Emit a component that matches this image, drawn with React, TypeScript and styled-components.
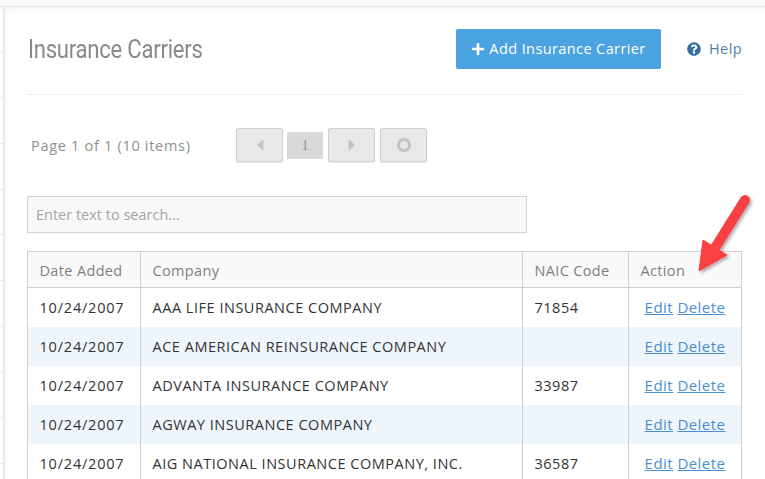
import React from 'react';
import styled, { createGlobalStyle } from 'styled-components';
import { FaPlus, FaQuestionCircle, FaCaretLeft, FaCaretRight } from 'react-icons/fa';

const Global = createGlobalStyle`
  html, body { margin: 0; padding: 0; background: #fff; overflow: hidden; }
  body { font-family: "Open Sans", "Noto Sans", sans-serif; }
`;
const Page = styled.div`
  position: relative; width: 765px; height: 479px; overflow: hidden; display: flex; flex-direction: column; background: #fff;
`;
const TopBar = styled.div`
  height: 6px; flex: none; background: #fafafa; border-bottom: 1px solid #e6e6e6; box-shadow: 0 2px 6px rgba(0,0,0,.05);
`;
const Body = styled.div`display: flex; flex: 1; min-height: 0;`;
const Rail = styled.div`
  width: 3px; flex: none; border-right: 2px solid #e8e8e8; display: flex; flex-direction: column; box-shadow: 3px 0 5px rgba(0,0,0,.025);
`;
const RailCell = styled.div`height: 45.67px; flex: none; border-bottom: 1px solid #e6e6e6; box-sizing: border-box;`;
const Main = styled.div`flex: 1; min-width: 0; padding: 0 23px 0 22px;`;
const Header = styled.div`
  height: 88px; box-sizing: border-box; display: flex; align-items: flex-start; border-bottom: 1px solid #eee; padding-top: 22px;
`;
const Title = styled.h1`
  margin: 4px 0 0 1px; font: 400 26px/32px "Roboto", sans-serif; letter-spacing: -0.3px; color: #8a8a8a; flex: 1; white-space: nowrap; transform-origin: left center; transform: scaleX(.85);
`;
const AddButton = styled.button`
  width: 205px; height: 40px; border: 0; border-radius: 2px; background: #4ba3e1; color: #fff; font: 400 14.5px/40px "Open Sans", sans-serif; letter-spacing: .4px; display: flex; align-items: center; justify-content: center; gap: 4px; padding: 0;
`;
const Help = styled.div`
  margin: 10px 0 0 26px; display: flex; align-items: center; gap: 8px; color: #4f7fa8; font-size: 14.5px; letter-spacing: .4px; line-height: 20px;
  svg { color: #37709f; }
`;
const Pager = styled.div`display: flex; align-items: center; height: 34px; margin-top: 33px;`;
const PageInfo = styled.div`width: 209px; padding-left: 4px; box-sizing: border-box; color: #8f8f8f; font-size: 14.5px; letter-spacing: .7px; white-space: nowrap;`;
const PagerButton = styled.div`
  width: 47px; height: 34px; box-sizing: border-box; border: 1px solid #cfcfcf; border-radius: 2px; background: #e8e8e8; color: #c2c2c2;
  display: flex; align-items: center; justify-content: center; box-shadow: 0 1px 1px rgba(0,0,0,.08);
`;
const PageNum = styled.div`
  width: 36px; height: 27px; margin: 0 5px 0 4px; background: #d9d9d9; color: #999; font: 15px/27px "Liberation Serif", serif; text-align: center;
`;
const Ring = styled.div`width: 14px; height: 14px; box-sizing: border-box; border: 3px solid #c2c2c2; border-radius: 50%;`;
const Gap = styled.div`width: 5px; flex: none;`;
const Search = styled.input`
  display: block; width: 500px; height: 37px; box-sizing: border-box; margin: 34px 0 18px 0; padding: 0 8px; border: 1px solid #d2d2d2; background: #f8f8f8; font: 14.5px "Open Sans", sans-serif; color: #555;
  &::placeholder { color: #a5a5a5; opacity: 1; }
`;
const Table = styled.table`
  border-collapse: collapse; width: 714px; table-layout: fixed; font-size: 14.5px; color: #333;
  th, td { border-left: 1px solid #cfcfcf; border-right: 1px solid #cfcfcf; padding: 0 12px 0 11.5px; text-align: left; font-weight: 400; white-space: nowrap; overflow: hidden; }
  th { height: 36px; padding-top: 2px; box-sizing: border-box; background: #f9f9f9; color: #7f7f7f; letter-spacing: .35px; border-top: 1px solid #cfcfcf; border-bottom: 1px solid #cfcfcf; }
  td { height: 39px; letter-spacing: .52px; }
`;
const Row = styled.tr<{ $alt: boolean }>`background: ${p => (p.$alt ? '#eef5fb' : '#fff')};`;
const DateCell = styled.td`&& { letter-spacing: .8px; }`;
const ActionCell = styled.td`&& { padding: 0 0 2px; box-sizing: border-box; text-align: center; font-size: 15px; letter-spacing: .45px; word-spacing: 0; }`;
const Link = styled.a`color: #4a90d0; text-decoration: underline;`;
const Arrow = styled.svg`position: absolute; left: 690px; top: 188px; pointer-events: none; overflow: visible;`;

const rows = [
  ['10/24/2007', 'AAA LIFE INSURANCE COMPANY', '71854'],
  ['10/24/2007', 'ACE AMERICAN REINSURANCE COMPANY', ''],
  ['10/24/2007', 'ADVANTA INSURANCE COMPANY', '33987'],
  ['10/24/2007', 'AGWAY INSURANCE COMPANY', ''],
  ['10/24/2007', 'AIG NATIONAL INSURANCE COMPANY, INC.', '36587'],
];

export default function App() {
  return (
    <Page>
      <Global />
      <TopBar />
      <Body>
        <Rail>{Array.from({ length: 10 }, (_, i) => <RailCell key={i} />)}</Rail>
        <Main>
          <Header>
            <Title>Insurance Carriers</Title>
            <AddButton><FaPlus size={14} /> Add Insurance Carrier</AddButton>
            <Help><FaQuestionCircle size={14} /> Help</Help>
          </Header>
          <Pager>
            <PageInfo>Page 1 of 1 (10 items)</PageInfo>
            <PagerButton><FaCaretLeft size={18} /></PagerButton>
            <PageNum>1</PageNum>
            <PagerButton><FaCaretRight size={18} /></PagerButton>
            <Gap />
            <PagerButton><Ring /></PagerButton>
          </Pager>
          <Search placeholder="Enter text to search..." />
          <Table>
            <colgroup><col style={{ width: 113 }} /><col style={{ width: 382 }} /><col style={{ width: 106 }} /><col style={{ width: 113 }} /></colgroup>
            <thead><tr><th>Date Added</th><th>Company</th><th>NAIC Code</th><th>Action</th></tr></thead>
            <tbody>
              {rows.map((r, i) => (
                <Row key={r[1]} $alt={i % 2 === 1}>
                  <DateCell>{r[0]}</DateCell><td>{r[1]}</td><td>{r[2]}</td>
                  <ActionCell><Link>Edit</Link> <Link>Delete</Link></ActionCell>
                </Row>
              ))}
            </tbody>
          </Table>
        </Main>
      </Body>
      <Arrow width="60" height="90" viewBox="0 0 60 90">
        <defs><filter id="s" x="-30%" y="-30%" width="170%" height="170%"><feDropShadow dx="2" dy="2" stdDeviation="1.5" floodColor="#000" floodOpacity=".3" /></filter></defs>
        <g filter="url(#s)" fill="#f94144" stroke="#f94144">
          <path d="M55 12 L25 60" strokeWidth="10" strokeLinecap="round" fill="none" />
          <path d="M9 83 L13 52 L37 67 Z" strokeWidth="1" />
        </g>
      </Arrow>
    </Page>
  );
}
